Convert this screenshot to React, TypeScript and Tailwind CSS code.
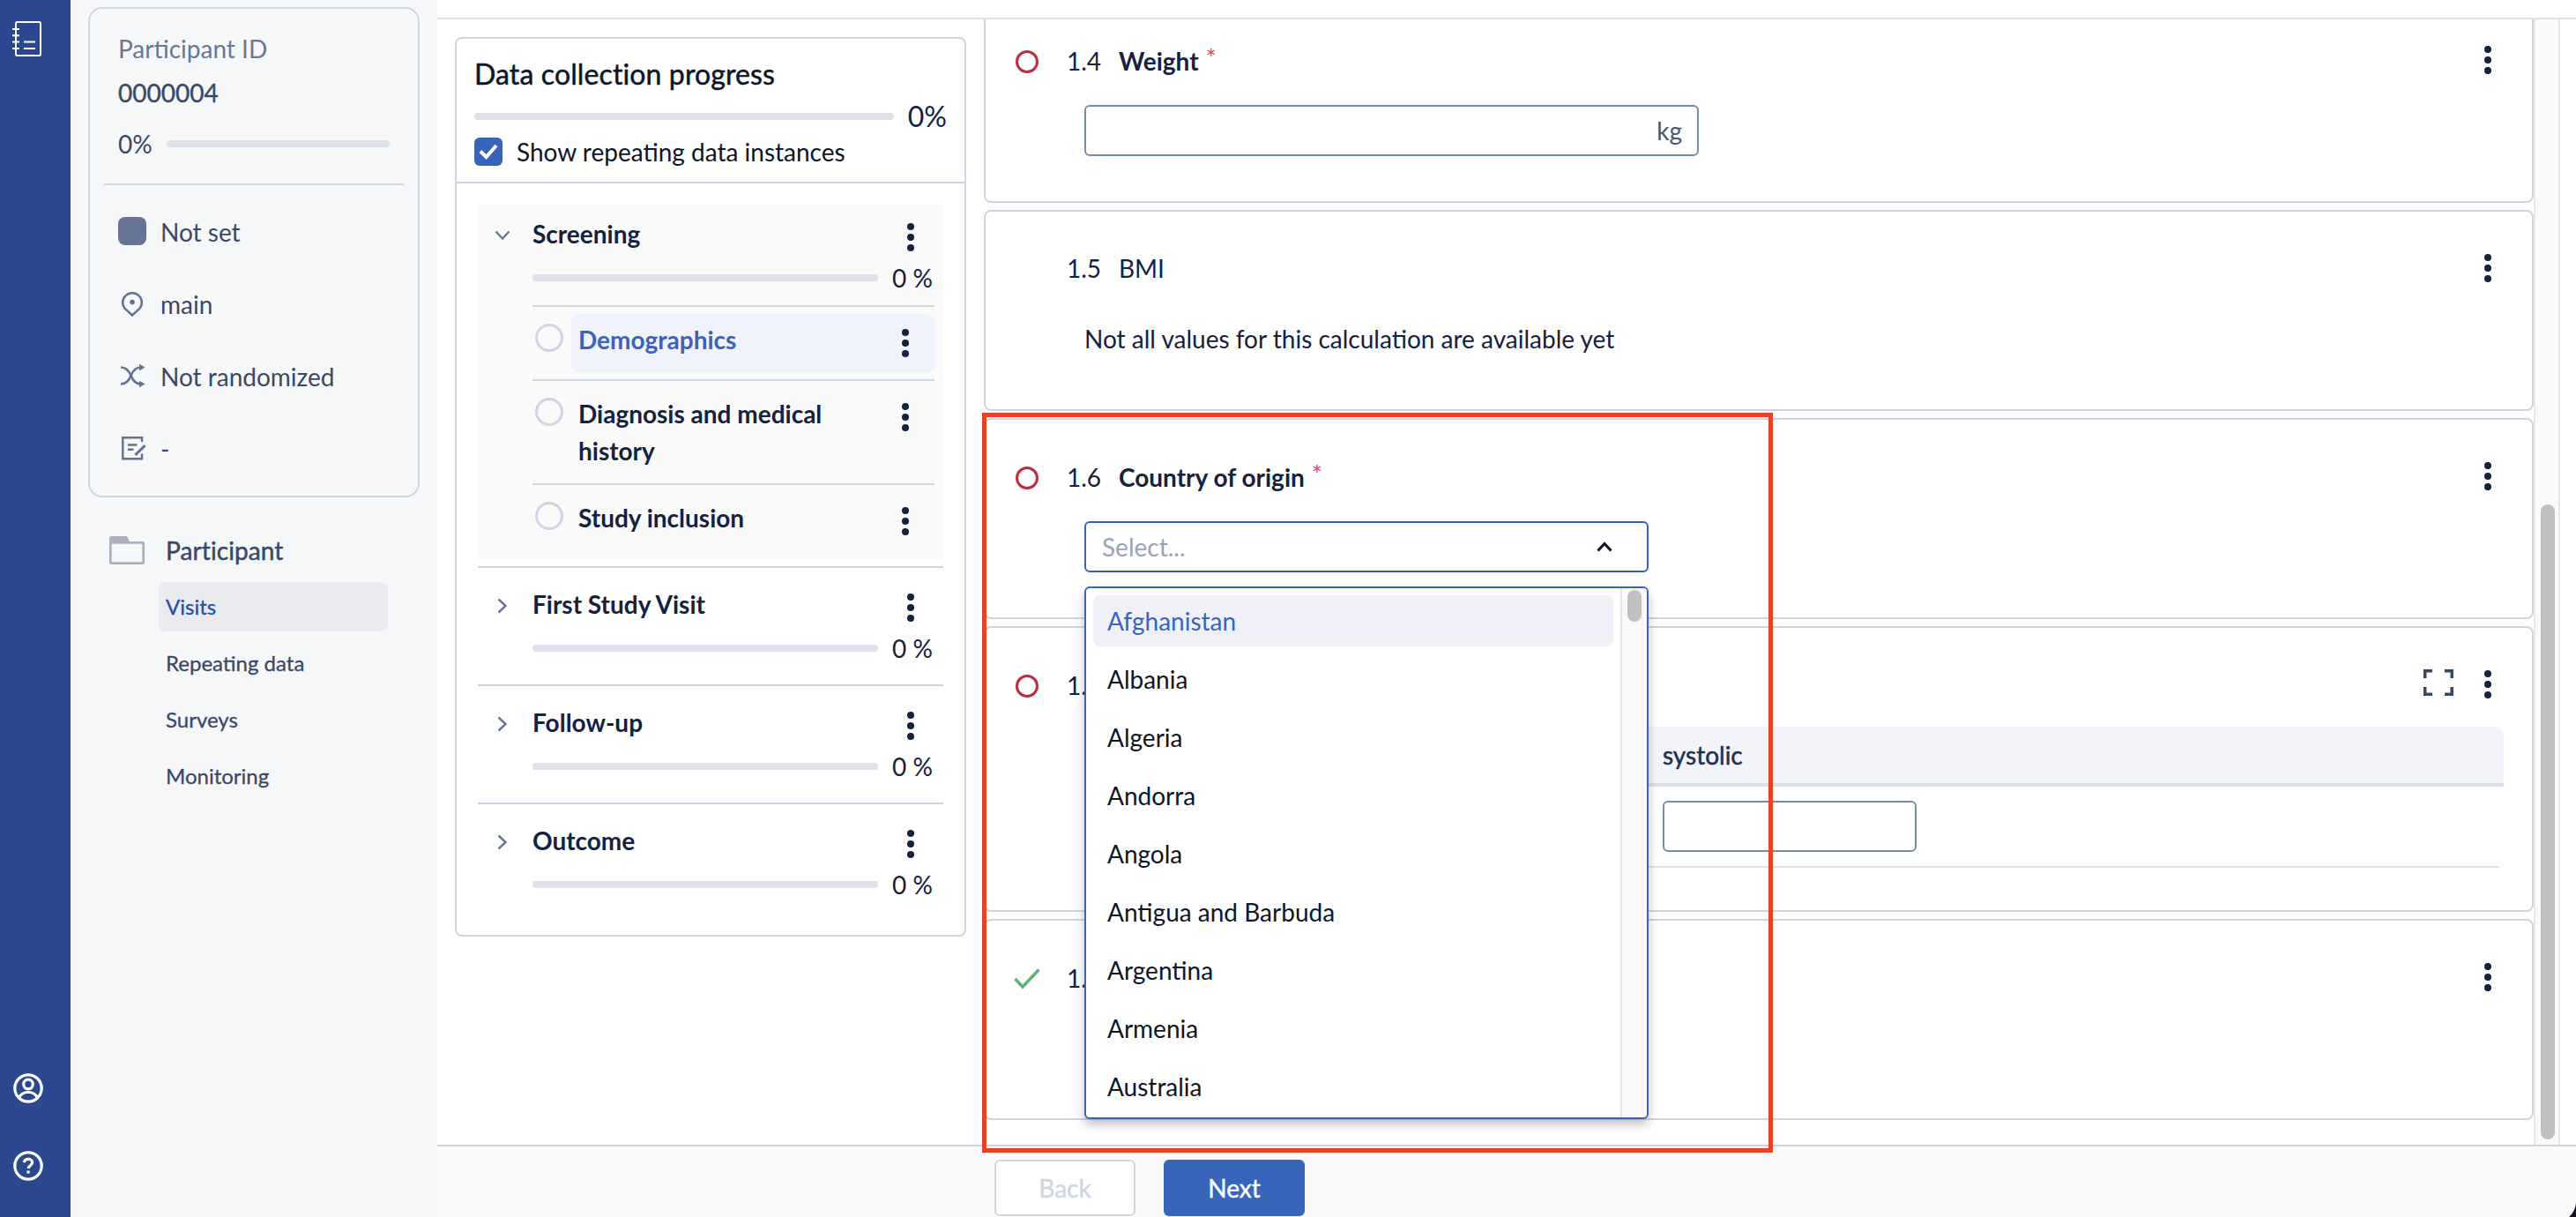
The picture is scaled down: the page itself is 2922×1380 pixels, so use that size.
import type { ReactNode } from "react";

const countries = [
  "Afghanistan",
  "Albania",
  "Algeria",
  "Andorra",
  "Angola",
  "Antigua and Barbuda",
  "Argentina",
  "Armenia",
  "Australia",
];

function Dots() {
  return (
    <div className="flex w-2 shrink-0 flex-col gap-1">
      <span className="size-2 rounded-full bg-[#14213f]" />
      <span className="size-2 rounded-full bg-[#14213f]" />
      <span className="size-2 rounded-full bg-[#14213f]" />
    </div>
  );
}

function NotebookIcon() {
  return (
    <svg width="34" height="42" viewBox="0 0 34 42" fill="none" stroke="#fff" strokeWidth="2">
      <rect x="4" y="2" width="28" height="38" rx="1.5" />
      <path d="M0 10h8M0 17.300h8M0 24.500h8M0 32h8M13 24.500h13M13 32h13" />
    </svg>
  );
}

function UserIcon() {
  return (
    <svg width="34" height="34" viewBox="0 0 34 34" fill="none" stroke="#fff" strokeWidth="3.200">
      <circle cx="17" cy="17" r="15.200" />
      <circle cx="17" cy="12.500" r="5.300" />
      <path d="M6.500 27.500c2.200-4 6-6 10.500-6s8.300 2 10.500 6" />
    </svg>
  );
}

function HelpIcon() {
  return (
    <svg width="34" height="34" viewBox="0 0 34 34" fill="none" stroke="#fff" strokeWidth="3.200">
      <circle cx="17" cy="17" r="15.200" />
      <path d="M12.300 13.200c.3-2.400 2.200-3.800 4.700-3.800 2.700 0 4.700 1.500 4.700 3.900 0 3-4.500 3.300-4.500 6.700" />
      <path d="M15.500 24h3.200" />
    </svg>
  );
}

function PinIcon() {
  return (
    <svg width="32" height="32" viewBox="0 0 32 32" fill="none" stroke="#667393" strokeWidth="2.500">
      <path d="M16 29.500l-8.300-7.700C6 20 5.200 17.800 5.200 14.800 5.200 8.900 10 4.200 16 4.200s10.800 4.700 10.800 10.600c0 3-.8 5.200-2.500 7z" />
      <circle cx="16" cy="14.600" r="2.800" fill="#667393" stroke="none" />
    </svg>
  );
}

function ShuffleIcon() {
  return (
    <svg width="32" height="32" viewBox="0 0 32 32" fill="none" stroke="#667393" strokeWidth="2.700">
      <path d="M3 6.500c5 0 9 3 11.500 9.500C17 22.500 20.500 25.500 26 25.500" />
      <path d="M3 25.500c5 0 9-3 11.500-9.500C17 9.500 20.500 6.500 26 6.500" />
      <path d="M24 2.800l6.500 3.800-6.500 3.800zM24 21.700l6.500 3.800-6.500 3.800z" fill="#667393" stroke="none" />
    </svg>
  );
}

function EditIcon() {
  return (
    <svg width="32" height="32" viewBox="0 0 32 32" fill="none" stroke="#667393" strokeWidth="2.500">
      <path d="M27 9V4.300H5.300v24H27v-5.800" />
      <path d="M11 12.500h10.500M11 17.700h6.500" />
      <path d="M30.500 13.200L19.500 23.800" strokeWidth="3" />
    </svg>
  );
}

function FolderIcon() {
  return (
    <svg width="40" height="32" viewBox="0 0 40 32">
      <path d="M0 2.500Q0 0 2.500 0H20l3 6H37.500Q40 6 40 8.500v21Q40 32 37.500 32h-35Q0 32 0 29.500z" fill="#abb0bf" />
      <rect x="2.700" y="8.700" width="34.600" height="20.600" fill="#f6f7f9" />
    </svg>
  );
}

function Chevron({ open }: { open?: boolean }) {
  return open ? (
    <svg width="18" height="12" viewBox="0 0 18 12" fill="none" stroke="#667599" strokeWidth="2.400">
      <path d="M1.500 1.500L9 9.500l7.500-8" />
    </svg>
  ) : (
    <svg width="12" height="18" viewBox="0 0 12 18" fill="none" stroke="#667599" strokeWidth="2.400">
      <path d="M1.500 1.500l8 7.500-8 7.500" />
    </svg>
  );
}

function InfoRow({ icon, label }: { icon: ReactNode; label: string }) {
  return (
    <div className="flex h-9 items-center gap-4">
      <div className="-mt-0.5 flex size-8 items-center justify-center">{icon}</div>
      <span>{label}</span>
    </div>
  );
}

function Sidebar() {
  return (
    <aside className="flex w-[416px] shrink-0 flex-col bg-[#f6f7f9] text-[28px] leading-9 text-[#3a4868]">
      <section className="mt-2 ml-5 h-[556px] w-[376px] rounded-2xl border-2 border-[#d0d5e2] px-4 pt-[27px]">
        <div className="px-4">
          <div className="text-[#667799]">Participant ID</div>
          <div className="mt-[14px] [-webkit-text-stroke:0.4px]">0000004</div>
          <div className="mt-[22px] flex items-center">
            <span className="w-[55px]">0%</span>
            <div className="h-2 w-[253px] rounded-full bg-[#dee1e9]" />
          </div>
        </div>
        <div className="mt-[27px] h-0.5 w-[340px] bg-[#d0d5e2]" />
        <div className="mt-[35px] flex flex-col gap-[46px] px-4">
          <InfoRow icon={<span className="size-8 rounded-lg bg-[#667393]" />} label="Not set" />
          <InfoRow icon={<PinIcon />} label="main" />
          <InfoRow icon={<ShuffleIcon />} label="Not randomized" />
          <InfoRow icon={<EditIcon />} label="-" />
        </div>
      </section>
      <nav className="mt-[42px] ml-11 w-[316px]">
        <div className="flex h-9 items-center gap-6">
          <FolderIcon />
          <span className="tracking-[0.1px] [-webkit-text-stroke:0.5px]">Participant</span>
        </div>
        <div className="mt-[18px] ml-14 flex flex-col gap-2 text-[24px] leading-[56px]">
          <span className="h-14 rounded-lg bg-[#eaebef] px-2 text-[#264ea3] [-webkit-text-stroke:0.3px]">Visits</span>
          <span className="h-14 px-2 [-webkit-text-stroke:0.3px]">Repeating data</span>
          <span className="h-14 px-2 [-webkit-text-stroke:0.3px]">Surveys</span>
          <span className="h-14 px-2 [-webkit-text-stroke:0.3px]">Monitoring</span>
        </div>
      </nav>
    </aside>
  );
}

function VisitHeader({ name, open }: { name: string; open?: boolean }) {
  return (
    <div className="flex h-[116px] flex-col pt-[15px]">
      <div className="flex h-9 items-center">
        <div className="mt-1 flex w-[62px] justify-center pr-[6px]">
          <Chevron open={open} />
        </div>
        <span className="flex-1 font-bold">{name}</span>
        <div className="mt-2 pr-[33px]">
          <Dots />
        </div>
      </div>
      <div className="mt-[14px] flex h-9 items-center pl-[62px]">
        <div className="h-2 w-[392px] rounded-full bg-[#dee1e9]" />
        <span className="ml-4">0 %</span>
      </div>
    </div>
  );
}

function FormRow({ children, className }: { children: ReactNode; className: string }) {
  return (
    <div className={`flex border-t-2 border-[#d0d5e2] pt-2 ${className}`}>
      <span className="mt-[11px] ml-[3px] size-8 shrink-0 rounded-full border-[3px] border-[#d0d5e2]" />
      {children}
    </div>
  );
}

function FormLabel({ children, active }: { children: ReactNode; active?: boolean }) {
  return (
    <div
      className={`ml-[9px] flex h-[66px] flex-1 rounded-lg pt-[8px] pr-[29px] pl-2 leading-[42px] font-bold ${
        active ? "bg-[#f0f3fc] text-[#3864b9]" : ""
      }`}
    >
      <span className="w-[300px] flex-1 pr-16">{children}</span>
      <div className="pt-[9px]">
        <Dots />
      </div>
    </div>
  );
}

function ProgressPanel() {
  return (
    <section className="mt-5 ml-5 h-[1020px] w-[580px] shrink-0 rounded-lg border-2 border-[#d0d4e2]">
      <div className="h-[164px] border-b-2 border-[#d0d4e2] px-5 pt-5">
        <h2 className="text-[32px] leading-10 tracking-[0.12px] text-[#0d1629] [-webkit-text-stroke:0.5px]">
          Data collection progress
        </h2>
        <div className="mt-2 flex h-10 items-center">
          <div className="h-2 w-[476px] rounded-full bg-[#dee1e9]" />
          <span className="ml-4 text-[32px] leading-10">0%</span>
        </div>
        <div className="mt-[2px] flex h-9 items-center text-[#0d1629]">
          <span className="flex size-8 items-center justify-center rounded-md bg-[#3864b9]">
            <svg width="22" height="18" viewBox="0 0 22 18" fill="none" stroke="#fff" strokeWidth="4">
              <path d="M2 8.500l6.500 6.500L20 2" />
            </svg>
          </span>
          <span className="ml-4">Show repeating data instances</span>
        </div>
      </div>
      <div className="px-6 pt-6">
        <div className="h-[402px] bg-[#fafafb]">
          <div className="h-[114px]">
            <VisitHeader name="Screening" open />
          </div>
          <div className="ml-[62px] w-[456px]">
            <FormRow className="h-[84px]">
              <FormLabel active>Demographics</FormLabel>
            </FormRow>
            <FormRow className="h-[118px]">
              <FormLabel>Diagnosis and medical history</FormLabel>
            </FormRow>
            <FormRow className="h-[86px]">
              <FormLabel>Study inclusion</FormLabel>
            </FormRow>
          </div>
        </div>
        {["First Study Visit", "Follow-up", "Outcome"].map((name) => (
          <div key={name} className="mt-2 border-t-2 border-[#d0d4e2] pt-2">
            <VisitHeader name={name} />
          </div>
        ))}
      </div>
    </section>
  );
}

function FieldCard({
  number,
  title,
  status,
  required,
  expandable,
  className,
  children,
}: {
  number: string;
  title?: string;
  status?: "empty" | "done";
  required?: boolean;
  expandable?: boolean;
  className?: string;
  children?: ReactNode;
}) {
  return (
    <section className={`w-[1758px] shrink-0 rounded-lg border-2 border-[#d0d4e2] pt-[46px] ${className ?? "h-[228px]"}`}>
      <header className="flex h-9 items-center pr-[46px] pl-[34px]">
        <div className="mt-1 flex w-[58px]">
          {status === "empty" && <span className="size-[26px] rounded-full border-[3px] border-[#bd2c3f]" />}
          {status === "done" && (
            <svg className="-ml-0.5" width="30" height="24" viewBox="0 0 30 24" fill="none" stroke="#5bb377" strokeWidth="3.500">
              <path d="M1.500 12l8.500 9L28.500 1.500" />
            </svg>
          )}
        </div>
        <span className={status ? "mt-0.5 w-[59px]" : "w-[59px]"}>{number}</span>
        {title && <span className={required ? "mt-0.5 font-bold" : ""}>{title}</span>}
        {required && <span className="-mt-1 ml-2 text-[29px] text-[#dc4e60]">*</span>}
        <div className="flex-1" />
        {expandable && (
          <svg className="mr-[35px] -mt-1" width="34" height="30" viewBox="0 0 34 30" fill="none" stroke="#3a4868" strokeWidth="3.500">
            <path d="M1.750 10V1.750H10M24 1.750h8.250V10M32.250 20v8.250H24M10 28.250H1.750V20" />
          </svg>
        )}
        <Dots />
      </header>
      {children}
    </section>
  );
}

function CountrySelect() {
  return (
    <div className="relative mt-[33px] ml-28 flex h-[58px] w-[640px] items-center justify-between rounded-md border-2 border-[#3864b9] bg-white pr-[39px] pl-[18px]">
      <span className="text-[#98a2b8]">Select...</span>
      <svg width="18" height="12" viewBox="0 0 18 12" fill="none" stroke="#0d1527" strokeWidth="3">
        <path d="M1.500 10.500L9 2.500l7.500 8" />
      </svg>
      <div className="absolute top-[72px] -left-0.5 z-10 flex h-[604px] w-[640px] overflow-hidden rounded-md border-2 border-[#3864b9] bg-white text-[#0d1527] shadow-[0_6px_12px_rgba(0,0,0,0.25)]">
        <ul className="flex flex-1 flex-col gap-2 px-2 pt-2">
          {countries.map((name, i) => (
            <li
              key={name}
              className={`h-[58px] shrink-0 rounded-lg px-4 leading-[58px] ${i === 0 ? "bg-[#f0f1f8] text-[#3864b9]" : ""}`}
            >
              {name}
            </li>
          ))}
        </ul>
        <div className="w-[30px] border-l-2 border-[#e6e6e6] bg-[#fafafa] pt-0.5 pl-1.5">
          <div className="h-9 w-4 rounded-full bg-[#c1c1c1]" />
        </div>
      </div>
    </div>
  );
}

function Form() {
  return (
    <div className="ml-5 flex min-w-0 flex-col gap-2">
      <FieldCard number="1.4" title="Weight" status="empty" required className="-mt-5 h-[228px]">
        <div className="mt-[33px] ml-28 flex h-[58px] w-[697px] items-center justify-end rounded-md border-2 border-[#7a8ba8] pr-[17px] text-[#46557a]">
          kg
        </div>
      </FieldCard>
      <FieldCard number="1.5" title="BMI">
        <p className="mt-[44px] ml-28">Not all values for this calculation are available yet</p>
      </FieldCard>
      <FieldCard number="1.6" title="Country of origin" status="empty" required>
        <CountrySelect />
      </FieldCard>
      <FieldCard number="1.7" status="empty" expandable className="h-[324px]">
        <div className="mt-[30px] ml-28 w-[1610px]">
          <div className="flex h-[68px] items-center rounded-t-[10px] border-b-4 border-[#dde1e9] bg-[#f3f4f9] pl-[656px] text-[#22304f]">
            <span className="[-webkit-text-stroke:0.5px]">systolic</span>
          </div>
          <div className="mr-[5px] h-[92px] border-b-2 border-[#dde1e9] pt-4 pl-[656px]">
            <div className="h-[58px] w-[288px] rounded-md border-2 border-[#7a8ba8] bg-white" />
          </div>
        </div>
      </FieldCard>
      <FieldCard number="1.8" status="done" />
    </div>
  );
}

export default function App() {
  return (
    <div className="relative flex h-[1380px] w-[2922px] overflow-hidden bg-white font-['Lato',sans-serif] text-[28px] leading-9 text-[#14213f]">
      <div className="flex w-20 shrink-0 flex-col items-start bg-[#2b478f] pt-[23px] pl-[14px]">
        <NotebookIcon />
        <div className="mt-[1152px] ml-px flex flex-col gap-[54px]">
          <UserIcon />
          <HelpIcon />
        </div>
      </div>
      <Sidebar />
      <main className="flex min-w-0 flex-1 flex-col">
        <div className="h-[22px] shrink-0 border-b-2 border-[#dfe1e6]" />
        <div className="flex h-[1276px] shrink-0 overflow-hidden">
          <ProgressPanel />
          <Form />
          <div className="w-[30px] shrink-0 border-x-2 border-[#e8e8e8] bg-[#fafafa] pt-[550px] pl-1.5">
            <div className="h-[720px] w-4 rounded-full bg-[#c1c1c1]" />
          </div>
        </div>
        <footer className="flex h-[82px] shrink-0 items-start gap-8 border-t-2 border-[#d0d4e2] bg-[#fafafb] pt-[15px] pl-[632px]">
          <button className="h-16 w-40 rounded-md border-2 border-[#d0d5e2] bg-white text-[#d0d5e2] [-webkit-text-stroke:0.4px]">
            Back
          </button>
          <button className="h-16 w-40 rounded-md bg-[#3864b9] text-white [-webkit-text-stroke:0.4px]">Next</button>
        </footer>
      </main>
      <div className="absolute top-[468px] left-[1114px] z-20 h-[839px] w-[897px] border-[5px] border-[#ea4025]" />
      <svg className="absolute right-0 bottom-0" width="8" height="16" viewBox="0 0 8 16">
        <path d="M8 0Q7 10 0 16H8z" fill="#1c0f22" />
      </svg>
    </div>
  );
}
